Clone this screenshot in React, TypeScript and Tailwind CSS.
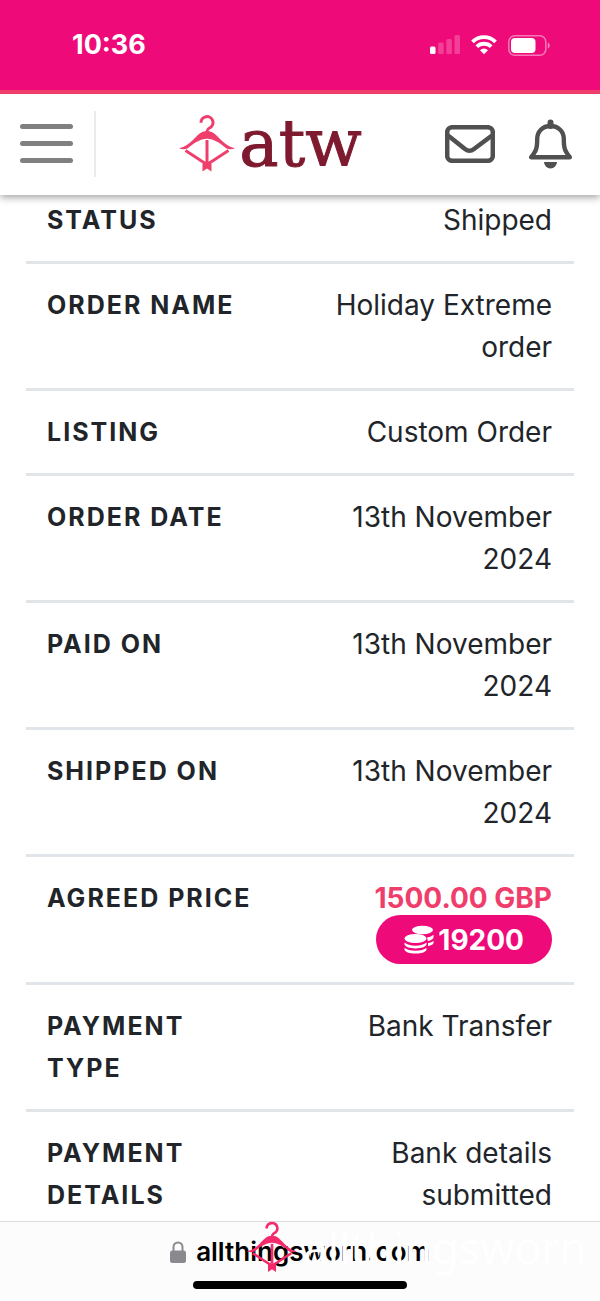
import type { ReactNode } from 'react';

type Row = { label: string; value: ReactNode };

function Coins() {
  return (
    <svg viewBox="0 0 30 30" className="h-[30px] w-[30px]" fill="white" aria-hidden="true">
      <ellipse cx="18.500" cy="5" rx="10.500" ry="4.200" />
      <path d="M23 12.600c3-.5 5.400-1.600 6.500-2.800v2.700c0 1.500-2.300 2.900-5.800 3.500-.1-1.300-.2-2.400-.7-3.400zM24 18.100c2.500-.5 4.500-1.400 5.500-2.400v2.300c0 1.300-2.200 2.500-5.500 3.200z" />
      <ellipse cx="11.500" cy="13.500" rx="11" ry="4.500" />
      <path d="M.5 17.500c2 2 6.200 3.200 11 3.200s9-1.200 11-3.200V19c0 2.600-4.900 4.400-11 4.400S.5 21.600.5 19z" />
      <path d="M.5 22.800c2 2 6.200 3 11 3s9-1 11-3v1.400c0 2.600-4.900 4.400-11 4.400S.5 26.800.5 24.200z" />
    </svg>
  );
}

const rows: Row[] = [
  { label: 'Status', value: 'Shipped' },
  { label: 'Order name', value: 'Holiday Extreme order' },
  { label: 'Listing', value: 'Custom Order' },
  { label: 'Order date', value: '13th November 2024' },
  { label: 'Paid on', value: '13th November 2024' },
  { label: 'Shipped on', value: '13th November 2024' },
  {
    label: 'Agreed price',
    value: (
      <div className="flex flex-col items-end">
        <span className="h-[38px] font-bold text-[#f03e6c]">1500.00 GBP</span>
        <span className="-mb-0.5 flex h-[49px] items-center gap-1 rounded-full bg-[#ef0a7a] px-7 font-bold text-white">
          <Coins />
          19200
        </span>
      </div>
    ),
  },
  { label: 'Payment type', value: 'Bank Transfer' },
  { label: 'Payment details', value: 'Bank details submitted' },
];

function Hanger({ className }: { className: string }) {
  return (
    <svg viewBox="0 0 56 57" className={className} fill="none" stroke="currentColor" aria-hidden="true">
      <path d="M22 7.800a6 6 0 1 1 8.600 5.200C28.600 14 28 14.600 28 18" strokeWidth="3" />
      <path
        d="M0 33.300C6 32 10 29 14.500 24.500 19 20 22 16 28 16s9 4 13.500 8.500C46 29 50 32 56 33.300c-3 1.200-6 1.300-8.500.3C43 30 36 23.800 28 23.800S13 30 8.500 33.600c-2.500 1-5.500.9-8.500-.3z"
        fill="currentColor"
        stroke="none"
      />
      <path d="M6.500 35.500L24 47M49.500 35.500L32 47" strokeWidth="2.800" />
      <path d="M28 25v22" strokeWidth="3" />
      <path d="M23.500 45.500l4.500 1.500 4.500-1.500v11L28 53.500l-4.500 3z" fill="currentColor" stroke="none" />
    </svg>
  );
}

function StatusBar() {
  return (
    <div className="flex h-[90px] items-center justify-between bg-[#ef0a7a] pr-[50px] pl-[72px] text-white">
      <span className="text-[27px] font-bold">10:36</span>
      <div className="flex items-center gap-[11px]">
        <svg viewBox="0 0 30 20" className="h-5 w-[30px]" fill="white" aria-hidden="true">
          <rect y="11.500" width="5.500" height="7.500" rx="1.500" />
          <g opacity=".22">
            <rect x="8.200" y="7.500" width="5.500" height="11.500" rx="1.500" />
            <rect x="16.400" y="4" width="5.500" height="15" rx="1.500" />
            <rect x="24.500" width="5.500" height="19" rx="1.500" />
          </g>
        </svg>
        <svg viewBox="0 0 26 20" className="h-5 w-[26px]" fill="none" stroke="white" strokeWidth="3.800" aria-hidden="true">
          <path d="M1.500 6.800a16.500 16.500 0 0 1 23 0" />
          <path d="M5.800 11.700a10.300 10.300 0 0 1 14.400 0" />
          <path d="M9 15.200a5.800 5.800 0 0 1 8 0l-4 4z" fill="white" stroke="none" />
        </svg>
        <svg viewBox="0 0 42 21" className="h-[21px] w-[42px]" aria-hidden="true">
          <rect x=".8" y=".8" width="37" height="19.400" rx="6" fill="none" stroke="white" strokeOpacity=".45" strokeWidth="1.500" />
          <rect x="3" y="3" width="24.500" height="15" rx="4" fill="white" />
          <path d="M39.800 7.500c2.500 1 2.500 5 0 6z" fill="white" fillOpacity=".5" />
        </svg>
      </div>
    </div>
  );
}

export default function App() {
  return (
    <div className="flex h-screen flex-col overflow-hidden bg-white font-['Inter',sans-serif] text-[#212529]">
      <header className="relative z-10 shrink-0 bg-white shadow-[0_2px_8px_rgba(0,0,0,0.4)]">
        <StatusBar />
        <div className="flex h-[105px] items-center border-t-4 border-[#f03e6c] pr-7 pb-0.5 pl-5">
          <button type="button" aria-label="Menu" className="flex flex-col gap-3">
            <span className="h-[5px] w-[53px] rounded-full bg-[#808080]" />
            <span className="h-[5px] w-[53px] rounded-full bg-[#808080]" />
            <span className="h-[5px] w-[53px] rounded-full bg-[#808080]" />
          </button>
          <div className="ml-[21px] h-[66px] w-0.5 bg-[#ebebeb]" />
          <a href="#" className="mx-auto flex items-center gap-1">
            <Hanger className="h-[57px] w-14 text-[#f03e6c]" />
            <span className="font-['DejaVu_Serif',serif] text-[66px] leading-[60px] text-[#7e1a2f] [-webkit-text-stroke:1px_#7e1a2f]">
              atw
            </span>
          </a>
          <div className="flex items-center gap-[34px] text-[#505050]">
            <button type="button" aria-label="Messages">
              <svg viewBox="0 0 50 38" className="h-[38px] w-[50px]" fill="none" stroke="currentColor" strokeWidth="4.500" aria-hidden="true">
                <rect x="2.200" y="2.200" width="45.600" height="33.600" rx="5" />
                <path d="M3 10.500l17 13.500c3 2.400 6 2.400 9 0L47 10.500" />
              </svg>
            </button>
            <button type="button" aria-label="Notifications">
              <svg viewBox="0 0 43 50" className="h-[50px] w-[43px]" fill="none" stroke="currentColor" strokeWidth="4.400" aria-hidden="true">
                <path d="M21.500 7c-8 0-13.300 5.500-13.300 13 0 10-1.200 12-6 18.200h38.600c-4.800-6.200-6-8.200-6-18.200 0-7.500-5.300-13-13.300-13z" strokeLinejoin="round" />
                <path d="M21.500 7V3.500" strokeWidth="6" strokeLinecap="round" />
                <path d="M15 43h13a6.500 6.500 0 0 1-13 0z" fill="currentColor" stroke="none" />
              </svg>
            </button>
          </div>
        </div>
      </header>

      <main className="-mt-4 min-h-0 flex-1 overflow-hidden px-[26px]">
        <table className="w-full">
          <tbody>
            {rows.map((row) => (
              <tr key={row.label} className="border-b-[3px] border-[#e1e4e8] align-top">
                <th
                  scope="row"
                  className="w-[43%] py-5 pl-[21px] text-left text-[25px] leading-[42px] font-bold tracking-[2px] uppercase"
                >
                  {row.label}
                </th>
                <td className="px-[22px] py-5 text-right text-[28px] leading-[42px]">{row.value}</td>
              </tr>
            ))}
          </tbody>
        </table>
      </main>

      <footer className="relative flex h-20 shrink-0 flex-col items-center border-t border-[#dcdcdc] bg-[#fcfcfc]">
        <div className="flex h-[59px] items-center gap-2.5">
          <svg viewBox="0 0 16 22" className="h-[22px] w-4" aria-hidden="true">
            <rect y="9.500" width="16" height="12.500" rx="2.500" fill="#8a8a8e" />
            <path d="M3.500 10V6a4.500 4.500 0 0 1 9 0v4" fill="none" stroke="#8a8a8e" strokeWidth="2" />
          </svg>
          <span className="text-[26px] font-semibold text-black">allthingsworn.com</span>
        </div>
        <div className="h-2 w-[214px] rounded-full bg-black" />
        {/* site watermark, printed over the address bar */}
        <div className="absolute -top-0.5 left-[247px] flex items-center gap-1.5 text-[#f52a6b]">
          <Hanger className="h-[54px] w-[50px]" />
          <span className="font-['Noto_Sans',sans-serif] text-[44px] leading-[50px] text-white" aria-hidden="true">
            allthingsworn
          </span>
        </div>
      </footer>
    </div>
  );
}
